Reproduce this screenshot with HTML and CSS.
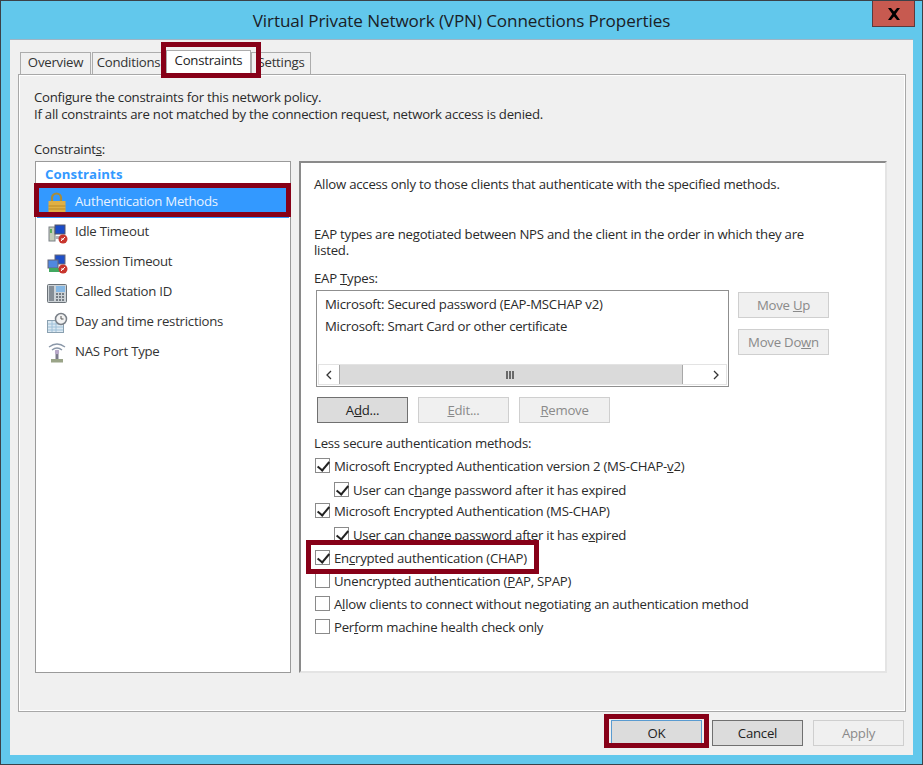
FILE: index.html
```html
<!DOCTYPE html>
<html lang="en">
<head>
<meta charset="utf-8">
<title>VPN Properties</title>
<link rel="stylesheet" href="styles.css">
</head>
<body>
<div class="window">
  <header class="titlebar">Virtual Private Network (VPN) Connections Properties</header>
  <button class="close" aria-label="Close"><svg width="14" height="12" viewBox="0 0 14 12"><path d="M1 0h3l3 3.6L10 0h3L8.7 6 13 12h-3L7 8.4 4 12H1l4.3-6z" fill="#000"/></svg></button>
  <main class="dialog">
    <nav class="tabs">
      <span class="tab tab-1">Overview</span>
      <span class="tab tab-2">Conditions</span>
      <span class="tab tab-active">Constraints</span>
      <span class="tab tab-4">Settings</span>
    </nav>
    <section class="page">
      <p class="intro">Configure the constraints for this network policy.<br>If all constraints are not matched by the connection request, network access is denied.</p>
      <div class="label-constraints">Constraint<u>s</u>:</div>
      <div class="columns">
        <aside class="nav-list">
          <div class="nav-head">Constraints</div>
          <div class="nav-item selected">
            <svg class="ico" viewBox="0 0 20 20"><path d="M5 11V7a4.500 4.500 0 0 1 9 0v4" fill="none" stroke="#a98c3a" stroke-width="2.200"/><rect x="1.500" y="10" width="17" height="11" fill="#e0b044"/><path d="M1.500 15h17M1.500 18h17" stroke="#b98a28"/></svg>
            <span>Authentication Methods</span>
          </div>
          <div class="nav-item">
            <svg class="ico" viewBox="0 0 20 20"><rect x="2" y="6" width="6" height="14" fill="#c4cdb8" stroke="#7a8088"/><rect x="3" y="8" width="2" height="4" fill="#5cae5c"/><rect x="8" y="4" width="10" height="9" fill="#1a4cc8" stroke="#556"/><rect x="8" y="15" width="6" height="3" fill="#b0b4b8"/><circle cx="16" cy="18" r="4.500" fill="#c8362e"/><path d="M14 20l4-4M14 18h3" stroke="#fff"/></svg>
            <span>Idle Timeout</span>
          </div>
          <div class="nav-item">
            <svg class="ico" viewBox="0 0 20 20"><rect x="8" y="4" width="10" height="9" fill="#1f50c8" stroke="#667"/><rect x="1" y="9" width="10" height="8" fill="#5088e0" stroke="#667"/><path d="M2 19h12" stroke="#42a860" stroke-width="4"/><circle cx="16" cy="18" r="4.500" fill="#c8362e"/><path d="M14 20l4-4M14 18h3" stroke="#fff"/></svg>
            <span>Session Timeout</span>
          </div>
          <div class="nav-item">
            <svg class="ico" viewBox="0 0 20 20"><rect x="0.500" y="3.500" width="19" height="18" rx="1" fill="#ccd2d6" stroke="#6b7278"/><rect x="2" y="5" width="5" height="15" fill="#868e96"/><rect x="9" y="5" width="9" height="6" fill="#86b8e4"/><path d="M9 13h9M9 16h9M9 19h9" stroke="#59626a" stroke-width="1.500" stroke-dasharray="2 1"/></svg>
            <span>Called Station ID</span>
          </div>
          <div class="nav-item">
            <svg class="ico" viewBox="0 0 20 20"><rect x="0.500" y="9.500" width="16" height="12" fill="#dce9f2" stroke="#8aa0b0"/><path d="M1 13h15M1 16h15M1 19h15M5 10v11M9 10v11" stroke="#9ec0d8"/><circle cx="14" cy="8" r="5.500" fill="#f2f2f2" stroke="#7a8088" stroke-width="1.500"/><path d="M14 5v3h2.500" fill="none" stroke="#555"/></svg>
            <span>Day and time restrictions</span>
          </div>
          <div class="nav-item">
            <svg class="ico" viewBox="0 0 20 20"><path d="M2 6q8-6 16 0M5 9q5-4 10 0" fill="none" stroke="#8a97a8" stroke-width="1.400"/><path d="M10 9v9" stroke="#7a7a8a" stroke-width="3"/><circle cx="10" cy="11" r="2.200" fill="#b8a8c8"/><rect x="4" y="18" width="12" height="3.500" fill="#9aa488"/></svg>
            <span>NAS Port Type</span>
          </div>
        </aside>
        <div class="detail">
          <p class="d-allow">Allow access only to those clients that authenticate with the specified methods.</p>
          <p class="d-eap">EAP types are negotiated between NPS and the client in the order in which they are listed.</p>
          <div class="d-label">EAP <u>T</u>ypes:</div>
          <div class="eap-row">
            <div class="listbox">
              <div class="list-lines">
                <div>Microsoft: Secured password (EAP-MSCHAP v2)</div>
                <div>Microsoft: Smart Card or other certificate</div>
              </div>
              <div class="scrollbar">
                <span class="sb-arrow"><svg width="8" height="10" viewBox="0 0 8 10"><path d="M6 1L2 5l4 4" fill="none" stroke="#333" stroke-width="1.300"/></svg></span>
                <span class="sb-thumb"><svg width="10" height="8" viewBox="0 0 10 8"><path d="M1 0v8M4 0v8M7 0v8" stroke="#444" stroke-width="1.500"/></svg></span>
                <span class="sb-gap"></span>
                <span class="sb-arrow"><svg width="8" height="10" viewBox="0 0 8 10"><path d="M2 1l4 4-4 4" fill="none" stroke="#333" stroke-width="1.300"/></svg></span>
              </div>
            </div>
            <div class="move-btns">
              <span class="btn disabled"><span>Move <u>U</u>p</span></span>
              <span class="btn disabled"><span>Move Do<u>w</u>n</span></span>
            </div>
          </div>
          <div class="eap-actions">
            <span class="btn enabled"><span>A<u>d</u>d...</span></span>
            <span class="btn disabled"><span><u>E</u>dit...</span></span>
            <span class="btn disabled"><span><u>R</u>emove</span></span>
          </div>
          <div class="d-less">Less secure authentication methods:</div>
          <div class="checks">
            <label class="chk"><span class="box on"></span><span>Microsoft Encrypted Authentication version 2 (MS-CHAP-<u>v</u>2)</span></label>
            <label class="chk sub"><span class="box on"></span><span>User can c<u>h</u>ange password after it has expired</span></label>
            <label class="chk"><span class="box on"></span><span>Microsoft Encrypted Authentication (MS-CHAP)</span></label>
            <label class="chk sub"><span class="box on"></span><span>User can change password after it has e<u>x</u>pired</span></label>
            <label class="chk"><span class="box on"></span><span>En<u>c</u>rypted authentication (CHAP)</span></label>
            <label class="chk"><span class="box"></span><span>Unencrypted authentication (<u>P</u>AP, SPAP)</span></label>
            <label class="chk"><span class="box"></span><span>A<u>l</u>low clients to connect without negotiating an authentication method</span></label>
            <label class="chk"><span class="box"></span><span>Per<u>f</u>orm machine health check only</span></label>
          </div>
        </div>
      </div>
    </section>
    <footer class="footer">
      <span class="btn ok">OK</span>
      <span class="btn enabled">Cancel</span>
      <span class="btn disabled">Apply</span>
    </footer>
  </main>
  <div class="mark mark-tab"></div>
  <div class="mark mark-nav"></div>
  <div class="mark mark-chap"></div>
  <div class="mark mark-ok"></div>
</div>
</body>
</html>
```
FILE: styles.css
```css
* { box-sizing: border-box; }
html, body { margin: 0; padding: 0; }
body {
  width: 923px; height: 765px; overflow: hidden;
  font-family: "Open Sans", "Noto Sans", sans-serif;
  font-size: 13.2px; color: #2a2a2a;
  letter-spacing: -0.24px;
}
u { text-underline-offset: 1px; text-decoration-thickness: 1px; }
p { margin: 0; }
.window {
  position: relative; width: 923px; height: 765px;
  background: #62c8ec; border: 1px solid #3b4148;
  padding: 0 9px 9px 9px;
  display: flex; flex-direction: column;
}
.titlebar {
  height: 38px; flex: none; padding-top: 8px; text-align: center;
  font-size: 17.1px; line-height: 24px; color: #1a2026; letter-spacing: -0.1px;
}
.close {
  position: absolute; right: 7px; top: 0; width: 43px; height: 26px;
  background: #c75a50; border: 1px solid #5b3a3e; border-top: 0; padding: 0;
  display: flex; align-items: center; justify-content: center;
}
.dialog {
  flex: 1; background: #f0f0f0; border-top: 1px solid #9fb4c4;
  padding: 9px 8px 0 8px;
  display: flex; flex-direction: column;
}
.tabs { height: 25px; flex: none; display: flex; align-items: flex-end; padding-left: 2px; position: relative; z-index: 1; }
.tab {
  height: 22px; margin-right: 1px; line-height: 19px; text-align: center;
  background: #f0f0f0; border: 1px solid #acacac; border-bottom: 0; flex: none;
  color: #333;
}
.tab-1 { width: 71px; }
.tab-2 { width: 73px; }
.tab-active { width: 85px; height: 25px; background: #fff; margin: 0 0 -1px 0; padding-bottom: 4px; position: relative; color: #222; }
.tab-4 { width: 60px; margin-left: 0; }
.page {
  width: 888px; height: 638px; flex: none;
  border: 1px solid #a8a8a8; box-shadow: inset 1px 1px 0 #fff, inset -1px -1px 0 #fff;
  padding: 14px 16px 0 16px;
}
.intro { line-height: 17px; margin-left: -1px; }
.label-constraints { margin: 17px 0 0 -1px; line-height: 18px; }
.columns { margin-top: 3px; display: flex; gap: 8px; height: 512px; }
.nav-list {
  width: 256px; flex: none; background: #fff; border: 1px solid #9a9a9a;
  padding: 2px 1px 0 1px;
}
.nav-head { height: 22px; line-height: 21px; padding-left: 8px; color: #3399ff; font-weight: 700; letter-spacing: 0.1px; }
.nav-item { height: 30px; display: flex; align-items: center; padding-left: 10px; gap: 8px; color: #333; }
.nav-item.selected { background: #3399ff; color: #e8f3ff; box-shadow: 0 2px 0 #3399ff; }
.ico { width: 20px; height: 20px; flex: none; overflow: visible; }
.detail {
  width: 588px; flex: none; background: #fff;
  border-top: 2px solid #8a8a8a; border-left: 2px solid #8a8a8a;
  border-right: 2px solid #e4e4e4; border-bottom: 2px solid #e4e4e4;
  padding: 12px 12px 0 13px;
}
.d-allow { line-height: 18px; }
.d-eap { margin-top: 33px; line-height: 16px; width: 510px; }
.d-label { margin-top: 11px; line-height: 18px; }
.eap-row { margin-top: 3px; display: flex; gap: 9px; padding-left: 2px; }
.listbox { width: 413px; height: 97px; background: #fff; border: 1px solid #8f8f8f; padding: 1px; display: flex; flex-direction: column; justify-content: space-between; }
.list-lines { padding: 1px 0 0 7px; line-height: 22px; }
.scrollbar { height: 21px; flex: none; display: flex; background: #fff; border: 1px solid #e3e3e3; }
.sb-arrow { width: 20px; flex: none; display: flex; align-items: center; justify-content: center; background: #fff; }
.sb-thumb { width: 344px; flex: none; background: #dadada; border-left: 1px solid #a8a8a8; border-right: 1px solid #a8a8a8; display: flex; align-items: center; justify-content: center; }
.sb-gap { flex: 1; }
.move-btns { display: flex; flex-direction: column; gap: 11px; padding-top: 2px; }
.btn { width: 91px; height: 26px; display: flex; align-items: center; justify-content: center; flex: none; }
.btn.disabled { background: #f0f0f0; border: 1px solid #cfcfcf; color: #8a8a8a; }
.btn.enabled { background: #dcdcdc; border: 1px solid #707070; color: #222; }
.eap-actions { margin-top: 10px; display: flex; gap: 10px; padding-left: 3px; }
.d-less { margin-top: 11px; line-height: 18px; }
.checks { margin-top: 2px; display: flex; flex-direction: column; }
.chk { height: 23px; display: flex; align-items: center; padding-left: 1px; white-space: nowrap; }
.chk:nth-child(2) { margin-top: 1px; }
.chk:nth-child(3) { margin-top: -2px; }
.chk:nth-child(4) { margin-top: 1px; }
.chk.sub { padding-left: 20px; }
.box {
  width: 15px; height: 15px; flex: none; margin-right: 4px; background: #fff; border: 1px solid #8a8a8a; position: relative;
}
.box.on::after {
  content: ""; position: absolute; left: 4px; top: 0; width: 5px; height: 10px;
  border: solid #222; border-width: 0 2px 2px 0; transform: rotate(40deg);
}
.footer { flex: 1; display: flex; gap: 10px; justify-content: flex-end; padding: 8px 0 0 0; margin-right: 1px; }
.btn.ok { background: #dcdcdc; border: 1px solid #5a9bd0; color: #222; }
.mark { position: absolute; border: 5px solid #870018; pointer-events: none; z-index: 5; }
.mark-tab { left: 160px; top: 41px; width: 100px; height: 36px; }
.mark-nav { left: 33px; top: 182px; width: 257px; height: 34px; }
.mark-chap { left: 305px; top: 539px; width: 233px; height: 34px; }
.mark-ok { left: 603px; top: 713px; width: 105px; height: 34px; }
```
